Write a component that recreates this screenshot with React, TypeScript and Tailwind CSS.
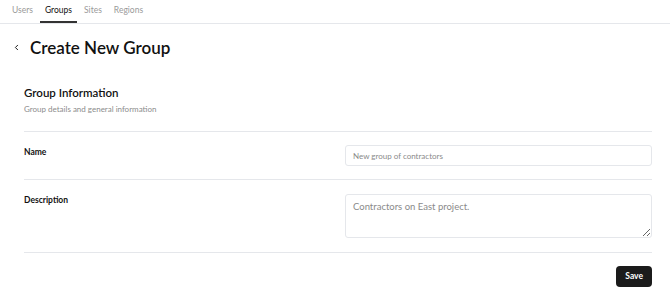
import { ChevronLeft } from "lucide-react";

const tabs = ["Users", "Groups", "Sites", "Regions"];

const App = () => {
  return (
    <div
      className="w-[670px] h-[298px] bg-white text-[#111111] overflow-hidden"
      style={{ fontFamily: "Lato, 'Noto Sans', sans-serif" }}
    >
      <nav className="flex h-[24px] border-b border-gray-200 pl-[7px] gap-[2px]">
        {tabs.map((tab) => (
          <div
            key={tab}
            className={`px-[5px] pt-[4px] text-[8.5px] ${
              tab === "Groups"
                ? "text-[#111111] border-b-2 border-[#333333]"
                : "text-[#9a9a9a]"
            }`}
          >
            {tab}
          </div>
        ))}
      </nav>

      <div className="flex items-center gap-[9px] pl-[12px] mt-[13px] h-[21px]">
        <ChevronLeft size={9} strokeWidth={2.5} />
        <h1 className="text-[17px] font-semibold leading-none">
          Create New Group
        </h1>
      </div>

      <div className="pl-[24px] pr-[18px] mt-[27px]">
        <div className="pb-[16px] border-b border-gray-200">
          <h2 className="text-[11.5px] font-semibold leading-[16px]">
            Group Information
          </h2>
          <p className="mt-[2px] text-[8px] leading-[12px] text-[#8c8c8c]">
            Group details and general information
          </p>
        </div>

        <div className="grid grid-cols-2 gap-x-[14px] pt-[13px] pb-[13px] border-b border-gray-200">
          <label className="text-[8.5px] font-bold pt-[1px] leading-[12px]">Name</label>
          <input
            className="h-[21px] rounded-[3px] border border-gray-200 px-[7px] text-[8px] placeholder:text-[#8a8a8a] outline-none"
            placeholder="New group of contractors"
          />
        </div>

        <div className="grid grid-cols-2 gap-x-[14px] pt-[14px] pb-[14px] border-b border-gray-200">
          <label className="text-[8.5px] font-bold pt-[0px] leading-[12px]">Description</label>
          <textarea
            className="h-[44px] rounded-[3px] border border-gray-200 px-[7px] py-[5px] text-[9.5px] placeholder:text-[#8a8a8a] outline-none"
            placeholder="Contractors on East project."
          />
        </div>

        <div className="flex justify-end pt-[13px]">
          <button className="h-[21px] px-[9px] rounded-[4px] bg-[#1b1b1b] text-white text-[8.5px] font-bold">
            Save
          </button>
        </div>
      </div>
    </div>
  );
};

export default App;
